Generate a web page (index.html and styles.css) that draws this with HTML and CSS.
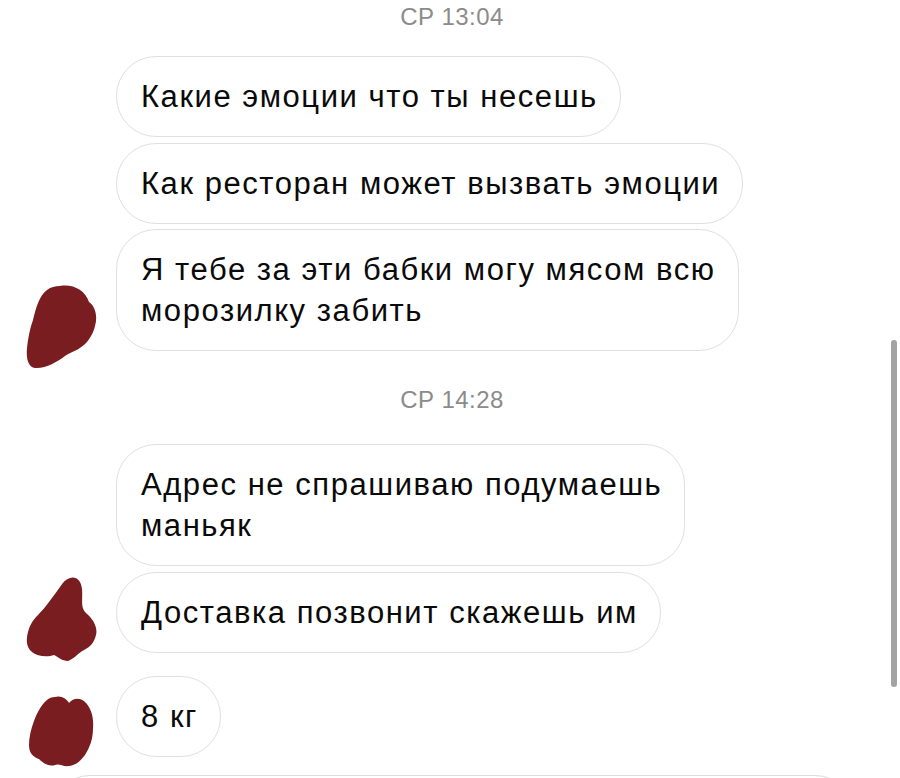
FILE: index.html
```html
<!DOCTYPE html>
<html lang="ru">
<head>
<meta charset="utf-8">
<link rel="stylesheet" href="styles.css">
</head>
<body>
<div class="chat">
  <div class="time first">СР 13:04</div>
  <div class="group">
    <div class="row"><div class="slot"></div><div class="bubble">Какие эмоции что ты несешь</div></div>
    <div class="row"><div class="slot"></div><div class="bubble">Как ресторан может вызвать эмоции</div></div>
    <div class="row">
      <div class="slot">
        <svg class="ava ava1" width="72" height="85" viewBox="0 0 72 85"><path d="M35 2 C48 0 60 6 64 18 C70 22 73 32 70 42 C68 50 64 56 60 60 C54 66 46 68 40 72 C32 78 20 85 10 84 C3 83 1 74 2 64 C3 54 5 44 8 36 C11 24 14 12 22 6 C26 3 30 2 35 2 Z" fill="#7a1d21"/></svg>
      </div>
      <div class="bubble">Я тебе за эти бабки могу мясом всю<br>морозилку забить</div>
    </div>
  </div>
  <div class="time second">СР 14:28</div>
  <div class="group">
    <div class="row"><div class="slot"></div><div class="bubble">Адрес не спрашиваю подумаешь<br>маньяк</div></div>
    <div class="row">
      <div class="slot">
        <svg class="ava ava2" width="72" height="84" viewBox="0 0 72 84"><path d="M44 1 C50 -1 55 3 56 12 C57 22 54 30 60 36 C67 42 72 50 70 58 C68 66 64 70 58 73 C52 76 48 82 42 84 C36 84 32 80 28 78 C22 80 12 80 6 75 C0 70 0 62 2 55 C4 47 8 42 12 38 C20 30 28 18 34 10 C37 5 40 2 44 1 Z" fill="#7a1d21"/></svg>
      </div>
      <div class="bubble">Доставка позвонит скажешь им</div>
    </div>
    <div class="row last">
      <div class="slot">
        <svg class="ava ava3" width="68" height="72" viewBox="0 0 68 72"><path d="M28 2 C34 0 40 4 42 8 C46 3 53 2 58 7 C64 13 67 22 66 33 C66 44 63 52 58 60 C54 65 50 70 42 71 C36 72 32 68 28 70 C22 72 16 68 12 64 C6 62 2 58 2 50 C2 42 4 34 7 26 C10 18 14 10 20 5 C22 3 25 2 28 2 Z" fill="#7a1d21"/></svg>
      </div>
      <div class="bubble">8 кг</div>
    </div>
  </div>
  <div class="composer"></div>
</div>
<div class="scrollbar"></div>
</body>
</html>
```

FILE: styles.css
```css
html, body {
  margin: 0;
  padding: 0;
  background: #ffffff;
  overflow: hidden;
  height: 778px;
}

.chat {
  display: flex;
  flex-direction: column;
  font-family: "Liberation Sans", Arial, sans-serif;
  color: #0a0a0a;
}

.time {
  text-align: center;
  font-size: 24px;
  line-height: 28px;
  letter-spacing: 0.4px;
  color: #8b8b8b;
  padding-left: 4px;
}

.time.first {
  margin-top: 3px;
  margin-bottom: 25px;
}

.time.second {
  margin-top: 35px;
  margin-bottom: 30px;
}

.group {
  display: flex;
  flex-direction: column;
  gap: 5.5px;
}

.row {
  display: flex;
  align-items: flex-end;
}

.row.last {
  margin-top: 18px;
}

.slot {
  width: 116px;
  flex: none;
  display: flex;
  align-items: flex-end;
}

.ava {
  display: block;
  flex: none;
}

.ava1 { margin-left: 25px; margin-bottom: -18px; }
.ava2 { margin-left: 26px; margin-bottom: -8px; }
.ava3 { margin-left: 27px; margin-bottom: -10px; }

.bubble {
  box-sizing: border-box;
  border: 1px solid #e0e0e0;
  border-radius: 40px;
  padding: 19px 22px 19px 24px;
  font-size: 31px;
  line-height: 41px;
  letter-spacing: 1.55px;
  white-space: nowrap;
  background: #fff;
}

.composer {
  margin-top: 18px;
  margin-left: 50px;
  width: 805px;
  height: 80px;
  flex: none;
  box-sizing: border-box;
  border: 1.5px solid #dcdcdc;
  border-radius: 40px;
}

.scrollbar {
  position: absolute;
  left: 891px;
  top: 340px;
  width: 6px;
  height: 347px;
  border-radius: 3px;
  background: #a3a3a3;
}
```
